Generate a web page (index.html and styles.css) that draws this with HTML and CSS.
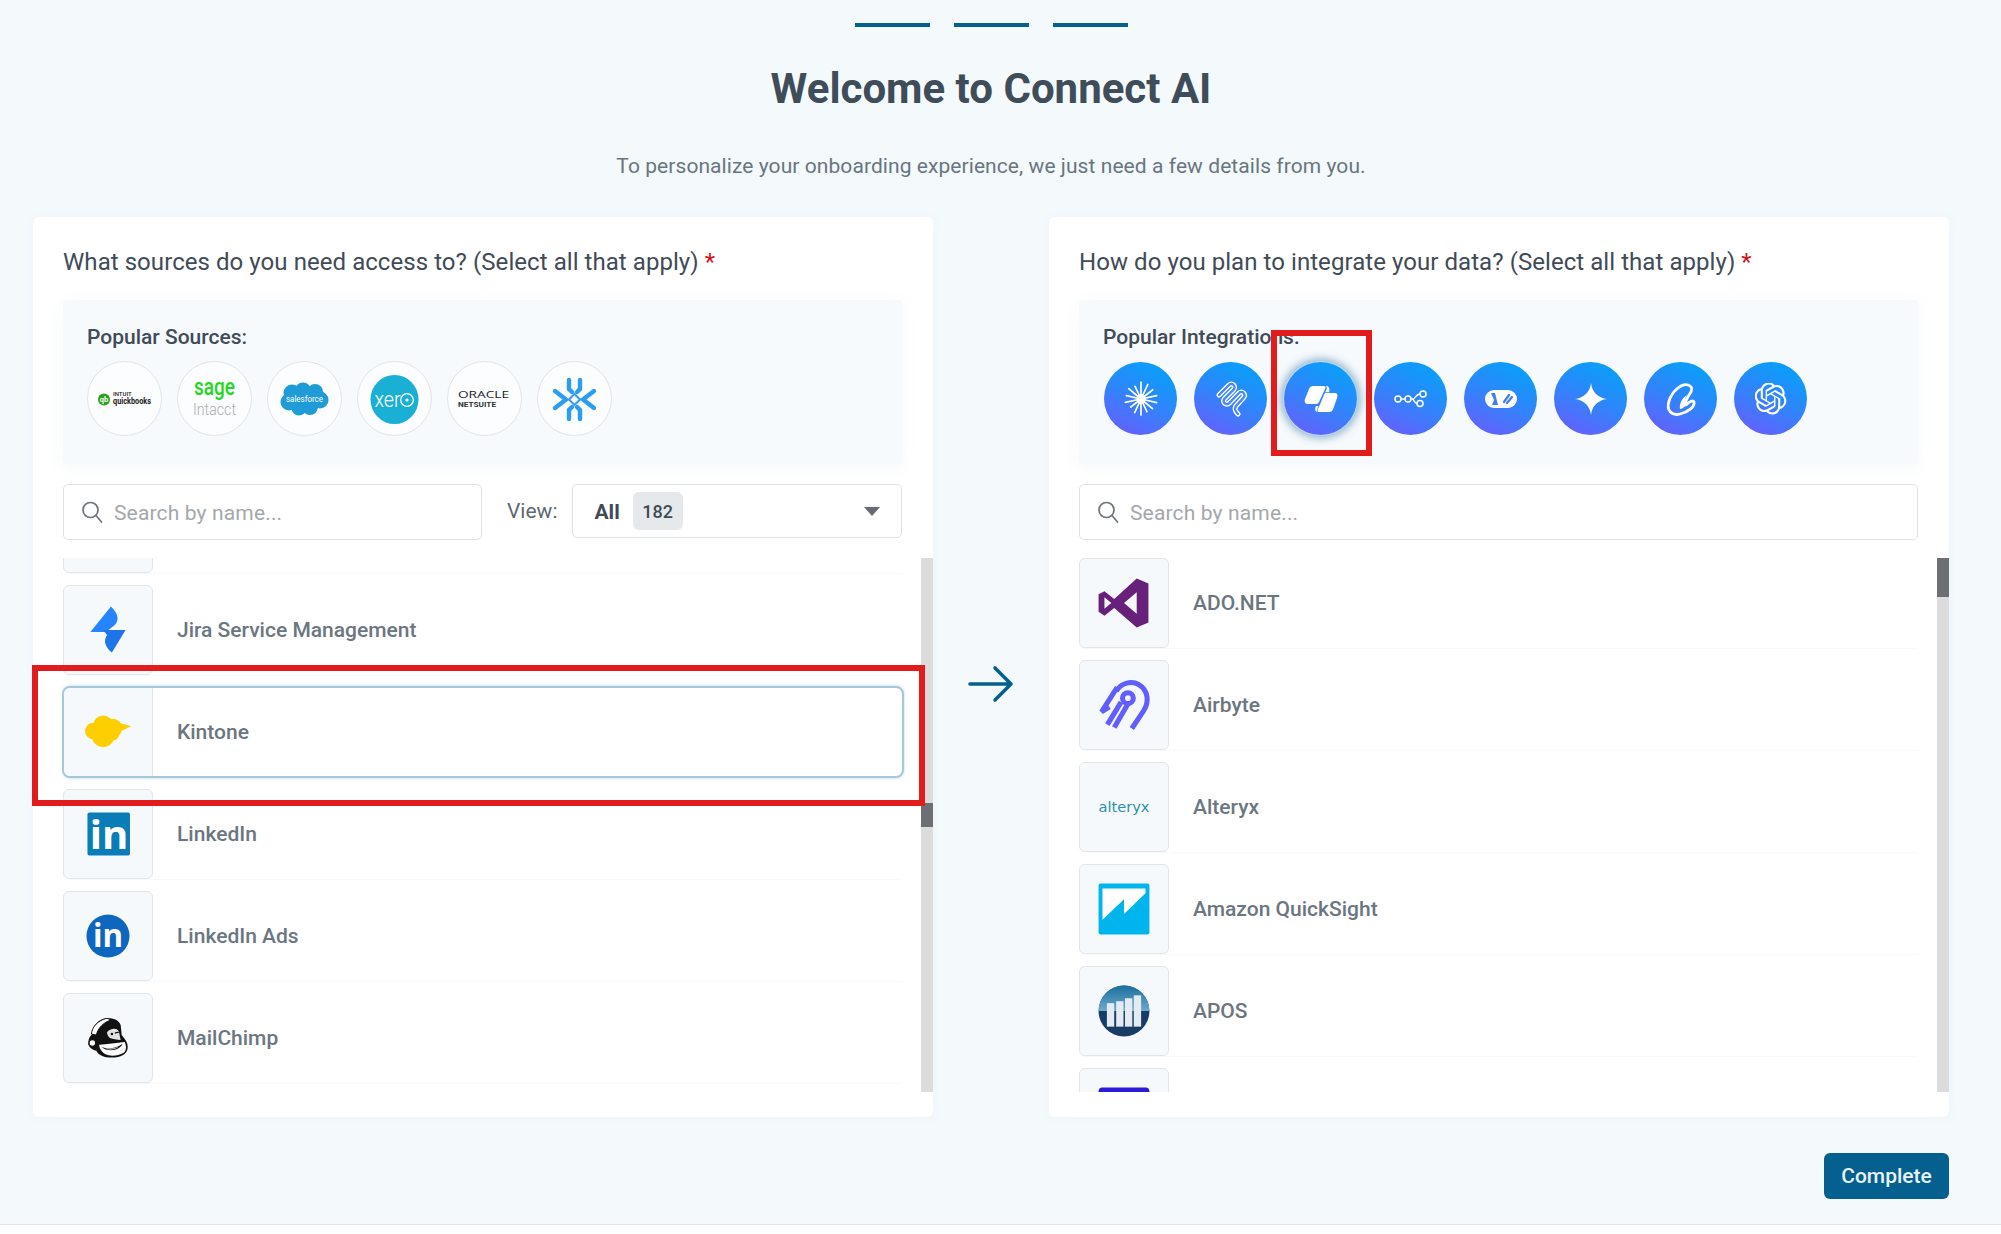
FILE: index.html
```html
<!DOCTYPE html>
<html lang="en">
<head>
<meta charset="utf-8">
<title>Welcome to Connect AI</title>
<link rel="stylesheet" href="styles.css">
</head>
<body>
<main class="page">
  <div class="steps"><span class="step"></span><span class="step"></span><span class="step"></span></div>
  <h1 class="title">Welcome to Connect AI</h1>
  <p class="subtitle">To personalize your onboarding experience, we just need a few details from you.</p>

  <div class="columns">
    <section class="card">
      <h2 class="question">What sources do you need access to? (Select all that apply) <span class="req">*</span></h2>
      <div class="popular">
        <div class="popular-label">Popular Sources:</div>
        <div class="bubbles">
          <div class="bubble"><svg viewBox="0 0 73 73" class="bubble-svg"><circle cx="16" cy="37.500" r="6" fill="#2ca01c"/><text x="16" y="40" class="t-qb-mark">qb</text><text x="25" y="33.500" class="t-qb-a">INTUIT</text><text x="25" y="42" class="t-qb-b" textLength="38" lengthAdjust="spacingAndGlyphs">quickbooks</text></svg></div>
          <div class="bubble"><svg viewBox="0 0 73 73" class="bubble-svg"><text x="36.500" y="33" class="t-sage" textLength="41" lengthAdjust="spacingAndGlyphs">sage</text><text x="36.500" y="53" class="t-intacct" textLength="43" lengthAdjust="spacingAndGlyphs">Intacct</text></svg></div>
          <div class="bubble"><svg viewBox="0 0 73 73" class="bubble-svg"><g fill="#1f9bd7"><circle cx="24" cy="31" r="8.500"/><circle cx="35" cy="28.500" r="8"/><circle cx="47" cy="30" r="8"/><circle cx="52" cy="38" r="8.500"/><circle cx="42" cy="45" r="8"/><circle cx="31" cy="46" r="7.500"/><circle cx="21" cy="40" r="8.500"/><rect x="20" y="28" width="32" height="16"/></g><text x="36.500" y="39.500" class="t-sf" textLength="37" lengthAdjust="spacingAndGlyphs">salesforce</text></svg></div>
          <div class="bubble"><svg viewBox="0 0 73 73" class="bubble-svg"><ellipse cx="36.500" cy="37.500" rx="24" ry="24.500" fill="#1ab0d5"/><text x="16.500" y="45" class="t-xero" textLength="26" lengthAdjust="spacingAndGlyphs">xer</text><circle cx="49" cy="38" r="6.300" fill="none" stroke="#fff" stroke-width="1.300"/><circle cx="49" cy="38" r="1.600" fill="#fff"/></svg></div>
          <div class="bubble"><svg viewBox="0 0 73 73" class="bubble-svg"><text x="10" y="36" class="t-oracle" textLength="51" lengthAdjust="spacingAndGlyphs">ORACLE</text><text x="10" y="45" class="t-netsuite" textLength="38" lengthAdjust="spacingAndGlyphs">NETSUITE</text></svg></div>
          <div class="bubble"><svg viewBox="0 0 73 73" class="bubble-svg"><g fill="none" stroke="#2d9df0" stroke-width="4.400" stroke-linecap="round" stroke-linejoin="miter"><path d="M31 18V27L34 30M42 18V27L39 30"/><path d="M31 57V48L34 45M42 57V48L39 45"/><path d="M17 29 28 37.500 17 46"/><path d="M56 29 45 37.500 56 46"/></g><path d="M36.500 32 42 37.500 36.500 43 31 37.500Z" fill="none" stroke="#2d9df0" stroke-width="2"/></svg></div>
        </div>
      </div>
      <div class="filters">
        <label class="search search-narrow">
          <svg viewBox="0 0 24 24" class="search-icon"><circle cx="10.500" cy="10" r="7.500" fill="none" stroke="#6d747b" stroke-width="1.700"/><path d="M16 15.500 21.500 22" stroke="#6d747b" stroke-width="1.700" fill="none" stroke-linecap="round"/></svg>
          <input class="search-input" placeholder="Search by name...">
        </label>
        <span class="view-label">View:</span>
        <div class="select"><span class="select-value">All</span><span class="badge">182</span><span class="caret"></span></div>
      </div>
      <div class="list-wrap">
        <div class="list list-scrolled">
          <div class="row"><div class="tile"></div></div>
          <div class="row"><div class="tile"><svg viewBox="0 0 90 90" class="tile-svg"><path d="M48 21C55 28 57 34 52 40L43 47H27Z" fill="#2684ff"/><path d="M40 45H63L49 68C42 62 40 56 44 50Z" fill="#1f74ec"/></svg></div><span class="row-name">Jira Service Management</span></div>
          <div class="row row-selected"><div class="tile"><svg viewBox="0 0 90 90" class="tile-svg"><g fill="#fdcf00"><circle cx="30" cy="44" r="8.500"/><circle cx="40" cy="38" r="10"/><circle cx="50" cy="41" r="9.500"/><circle cx="40" cy="49" r="11.500"/><circle cx="50" cy="47" r="6.500"/><path d="M54 35 69 39 56 45Z"/></g></svg></div><span class="row-name">Kintone</span></div>
          <div class="row"><div class="tile"><svg viewBox="0 0 90 90" class="tile-svg"><rect x="24" y="23" width="43.500" height="44" rx="2" fill="#0a7cb8"/><text x="46" y="60" class="t-in-square">in</text></svg></div><span class="row-name">LinkedIn</span></div>
          <div class="row"><div class="tile"><svg viewBox="0 0 90 90" class="tile-svg"><circle cx="45" cy="45" r="22" fill="#0e66bf"/><text x="45" y="56" class="t-in-round">in</text></svg></div><span class="row-name">LinkedIn Ads</span></div>
          <div class="row"><div class="tile"><svg viewBox="0 0 90 90" class="tile-svg"><path d="M29 41C29 33 35 26 42 25 50 24 56 26 58 32L59 42C62 46 66 50 65 56 64 62 58 65 49 65 41 65 36 63 33 58 28 57 24 53 25 49 25 45 27 43 29 41Z" fill="#111"/><path d="M28 41C29 33 35 27 43 25 45 25 47 26 47 27 41 29 35 34 33 42Z" fill="#fff" stroke="#111" stroke-width="1"/><path d="M44 39C47 35 54 34 56 38 57 41 57 44 58 47 54 47 50 46 47 45 45 43 44 41 44 39Z" fill="#e2e2e2"/><path d="M36 52C44 51 54 50 62 49 64 53 64 58 61 60 56 63 48 64 43 62 39 60 36 56 36 52Z" fill="#fff"/><path d="M38 54C45 57 53 56 60 51 57 58 45 60 38 54Z" fill="#111"/><path d="M42 55.500C46 56.500 52 56 56 54 52 57 46 57.500 42 55.500Z" fill="#fff"/><circle cx="49" cy="41" r="1.300" fill="#111"/><path d="M52 40 56 39" stroke="#111" stroke-width="1.200"/><circle cx="29" cy="50" r="3.400" fill="#fff" stroke="#111" stroke-width="1.200"/></svg></div><span class="row-name">MailChimp</span></div>
        </div>
        <div class="scrollbar"><span class="thumb thumb-mid"></span></div>
      </div>
    </section>

    <div class="arrow-col">
      <svg viewBox="0 0 46 38" class="arrow"><path d="M2 19H43M27 3 43 19 27 35" fill="none" stroke="#05608f" stroke-width="3.600" stroke-linecap="round" stroke-linejoin="round"/></svg>
    </div>

    <section class="card">
      <h2 class="question">How do you plan to integrate your data? (Select all that apply) <span class="req">*</span></h2>
      <div class="popular">
        <div class="popular-label">Popular Integrations:</div>
        <div class="bubbles">
          <div class="orb"><svg viewBox="0 0 73 73" class="orb-svg"><g stroke="#fff" stroke-width="1.700" stroke-linecap="round"><path d="M37 37V20"/><path d="M37 37V21" transform="rotate(25 37 37)"/><path d="M37 37V22" transform="rotate(52 37 37)"/><path d="M37 37V21" transform="rotate(78 37 37)"/><path d="M37 37V21" transform="rotate(103 37 37)"/><path d="M37 37V22" transform="rotate(130 37 37)"/><path d="M37 37V23" transform="rotate(155 37 37)"/><path d="M37 37V21" transform="rotate(180 37 37)"/><path d="M37 37V22" transform="rotate(205 37 37)"/><path d="M37 37V24" transform="rotate(232 37 37)"/><path d="M37 37V21" transform="rotate(258 37 37)"/><path d="M37 37V22" transform="rotate(283 37 37)"/><path d="M37 37V21" transform="rotate(310 37 37)"/><path d="M37 37V23" transform="rotate(335 37 37)"/></g><circle cx="37" cy="37" r="4.500" fill="#fff"/></svg></div>
          <div class="orb"><svg viewBox="0 0 73 73" class="orb-svg"><path d="M25 33 35 23A3.250 3.250 0 0 1 39.600 27.600L30.600 36.600A3.250 3.250 0 0 0 35.200 41.200L45 31A3.250 3.250 0 0 1 49.600 35.600L42 44C40 47 41 49 44 52" fill="none" stroke="#fff" stroke-width="5.200" stroke-linecap="round" stroke-linejoin="round"/><path d="M25 33 35 23A3.250 3.250 0 0 1 39.600 27.600L30.600 36.600A3.250 3.250 0 0 0 35.200 41.200L45 31A3.250 3.250 0 0 1 49.600 35.600L42 44C40 47 41 49 44 52" fill="none" stroke="#4a88fb" stroke-width="2.400" stroke-linecap="round" stroke-linejoin="round"/></svg></div>
          <div class="orb orb-active"><svg viewBox="0 0 73 73" class="orb-svg"><path d="M29 24H39C42 24 42 25 41 27L35 40C34 42 33 42 31 42H25C21 42 20 40 21 37L25 27C26 25 27 24 29 24Z" fill="#fff"/><path d="M42 24C45 24 46 26 45 31H41L43 26Z" fill="#fff"/><path d="M32 44H36L33.500 50C31 49.500 30.500 47 32 44Z" fill="#fff"/><path d="M42 31H50C53.500 31 54 33 53 36L49.500 46C48.500 49 47 50 45 50H35C33 50 33 49 34 47L40 33C40.500 31.500 41 31 42 31Z" fill="#fff" stroke="#3d84fb" stroke-width="1.400" paint-order="stroke"/></svg></div>
          <div class="orb"><svg viewBox="0 0 73 73" class="orb-svg"><g fill="none" stroke="#fff" stroke-width="1.500"><circle cx="24" cy="37" r="3"/><circle cx="34" cy="37" r="3"/><circle cx="49" cy="32" r="3"/><circle cx="46" cy="41.500" r="3"/><path d="M27 37H31M37 37H39C41 37 42 32 46 32M39 37C40 39 41 41 43 41.500"/></g></svg></div>
          <div class="orb"><svg viewBox="0 0 73 73" class="orb-svg"><rect x="21" y="28" width="32" height="18" rx="9" fill="#fff"/><path d="M27 31 31 31 34 43H28L30 38Z" fill="#3f7df8"/><path d="M40 40 45 33M43 41 48 35" stroke="#3f7df8" stroke-width="2.200" fill="none" stroke-linecap="round"/></svg></div>
          <div class="orb"><svg viewBox="0 0 73 73" class="orb-svg"><path d="M37 21C38 30 44 36 53 37 44 38 38 44 37 53 36 44 30 38 21 37 30 36 36 30 37 21Z" fill="#fff"/></svg></div>
          <div class="orb"><svg viewBox="0 0 73 73" class="orb-svg"><path d="M44 23C38 21 28 29 25 39 22 49 28 54 36 52 44 50 51 45 50 40 49 38 46 39 42 43 40 40 44 35 47 30 49 26 47 24 44 23Z" fill="none" stroke="#fff" stroke-width="2.800" stroke-linejoin="round"/><path d="M43 33C38 36 35 42 36 47 38 47 39 46 42 43.500 40 41 41 36 43 33Z" fill="#fff"/></svg></div>
          <div class="orb"><svg viewBox="0 0 24 24" class="orb-svg orb-svg-openai"><path fill="#fff" d="M22.2819 9.8211a5.9847 5.9847 0 0 0-.5157-4.9108 6.0462 6.0462 0 0 0-6.5098-2.9A6.0651 6.0651 0 0 0 4.9807 4.1818a5.9847 5.9847 0 0 0-3.9977 2.9 6.0462 6.0462 0 0 0 .7427 7.0966 5.98 5.98 0 0 0 .511 4.9107 6.051 6.051 0 0 0 6.5146 2.9001A5.9847 5.9847 0 0 0 13.2599 24a6.0557 6.0557 0 0 0 5.7718-4.2058 5.9894 5.9894 0 0 0 3.9977-2.9001 6.0557 6.0557 0 0 0-.7475-7.0729zm-9.022 12.6081a4.4755 4.4755 0 0 1-2.8764-1.0408l.1419-.0804 4.7783-2.7582a.7948.7948 0 0 0 .3927-.6813v-6.7369l2.02 1.1686a.071.071 0 0 1 .038.052v5.5826a4.504 4.504 0 0 1-4.4945 4.4944zm-9.6607-4.1254a4.4708 4.4708 0 0 1-.5346-3.0137l.142.0852 4.783 2.7582a.7712.7712 0 0 0 .7806 0l5.8428-3.3685v2.3324a.0804.0804 0 0 1-.0332.0615L9.74 19.9502a4.4992 4.4992 0 0 1-6.1408-1.6464zM2.3408 7.8956a4.485 4.485 0 0 1 2.3655-1.9728V11.6a.7664.7664 0 0 0 .3879.6765l5.8144 3.3543-2.0201 1.1685a.0757.0757 0 0 1-.071 0l-4.8303-2.7865A4.504 4.504 0 0 1 2.3408 7.872zm16.5963 3.8558L13.1038 8.364 15.1192 7.2a.0757.0757 0 0 1 .071 0l4.8303 2.7913a4.4944 4.4944 0 0 1-.6765 8.1042v-5.6772a.79.79 0 0 0-.407-.667zm2.0107-3.0231l-.142-.0852-4.7735-2.7818a.7759.7759 0 0 0-.7854 0L9.409 9.2297V6.8974a.0662.0662 0 0 1 .0284-.0615l4.8303-2.7866a4.4992 4.4992 0 0 1 6.6802 4.66zM8.3065 12.863l-2.02-1.1638a.0804.0804 0 0 1-.038-.0567V6.0742a4.4992 4.4992 0 0 1 7.3757-3.4537l-.142.0805L8.704 5.459a.7948.7948 0 0 0-.3927.6813zm1.0976-2.3654l2.602-1.4998 2.6069 1.4998v2.9994l-2.5974 1.5-2.6067-1.5Z"/></svg></div>
        </div>
      </div>
      <div class="filters">
        <label class="search">
          <svg viewBox="0 0 24 24" class="search-icon"><circle cx="10.500" cy="10" r="7.500" fill="none" stroke="#6d747b" stroke-width="1.700"/><path d="M16 15.500 21.500 22" stroke="#6d747b" stroke-width="1.700" fill="none" stroke-linecap="round"/></svg>
          <input class="search-input" placeholder="Search by name...">
        </label>
      </div>
      <div class="list-wrap">
        <div class="list">
          <div class="row"><div class="tile"><svg viewBox="0 0 90 90" class="tile-svg"><path fill-rule="evenodd" fill="#68217a" d="M58 20 70 25V65L58 70 35 50 25 58 19 54V36L25 33 35 41ZM58 34 45 45 58 56ZM25 39V51L32 45Z"/></svg></div><span class="row-name">ADO.NET</span></div>
          <div class="row"><div class="tile"><svg viewBox="0 0 90 90" class="tile-svg"><g fill="none" stroke="#615eff" stroke-width="5.200"><path d="M37 31C42 22 53 20 60 24 70 30 71 42 65 51L53 69"/><circle cx="49" cy="38" r="5.500"/><path d="M49 44 35 68"/><path d="M38 27 22 52 30 47"/><path d="M42 42 28 65"/></g></svg></div><span class="row-name">Airbyte</span></div>
          <div class="row"><div class="tile"><svg viewBox="0 0 90 90" class="tile-svg"><text x="45" y="50" class="t-alteryx" textLength="52" lengthAdjust="spacingAndGlyphs">alteryx</text></svg></div><span class="row-name">Alteryx</span></div>
          <div class="row"><div class="tile"><svg viewBox="0 0 90 90" class="tile-svg"><rect x="19" y="19" width="52" height="52" rx="2" fill="#00b5ee"/><path d="M23 24H67V29L45 50V35L23 56Z" fill="#fff"/></svg></div><span class="row-name">Amazon QuickSight</span></div>
          <div class="row"><div class="tile"><svg viewBox="0 0 90 90" class="tile-svg"><defs><linearGradient id="aposTop" x1="0" y1="0" x2="0" y2="1"><stop offset="0" stop-color="#1a6f9f"/><stop offset="1" stop-color="#6fa9cc"/></linearGradient></defs><circle cx="45" cy="45" r="26" fill="#173c66"/><path d="M19 45A26 26 0 0 1 71 45Z" fill="url(#aposTop)"/><g fill="#e4ebf3"><rect x="27.500" y="37" width="7.500" height="24"/><rect x="37" y="35" width="7.500" height="26"/><rect x="46" y="32" width="7.500" height="29"/><rect x="55" y="29" width="7.500" height="32"/></g></svg></div><span class="row-name">APOS</span></div>
          <div class="row"><div class="tile"><svg viewBox="0 0 90 90" class="tile-svg"><rect x="19" y="19" width="52" height="52" rx="4" fill="#2a1bd8"/></svg></div></div>
        </div>
        <div class="scrollbar"><span class="thumb"></span></div>
      </div>
    </section>
  </div>

  <div class="actions"><button class="complete" type="button">Complete</button></div>
</main>
<div class="note note-kintone"></div>
<div class="note note-copilot"></div>
</body>
</html>
```

FILE: styles.css
```css
* { box-sizing: border-box; }
html, body { margin: 0; padding: 0; }
body {
  background: #fdfefe;
  font-family: Roboto, "Liberation Sans", sans-serif;
  color: #3c4a57;
  height: 1234px;
  overflow: hidden;
}
.page {
  height: 1225px;
  padding: 23px 52px 0 33px;
  background: #f4f9fc;
  border-bottom: 1px solid #dfe4e9;
}
.steps { display: flex; justify-content: center; gap: 24px; }
.step { width: 75px; height: 4px; background: #05608f; }
.title {
  margin: 37px 0 0;
  font-size: 42px;
  line-height: 50px;
  font-weight: 700;
  text-align: center;
  color: #3f4c59;
}
.subtitle {
  margin: 37px 0 0;
  font-size: 21px;
  letter-spacing: .07px;
  line-height: 30px;
  font-weight: 400;
  text-align: center;
  color: #69757f;
}
.columns {
  display: grid;
  grid-template-columns: 900px 1fr 900px;
  margin-top: 36px;
}
.card {
  height: 900px;
  padding: 30px 31px 25px 30px;
  background: #fff;
  border-radius: 6px;
  box-shadow: 0 0 12px rgba(120, 150, 180, .06);
}
.question {
  margin: 0 0 23px;
  font-size: 24px;
  letter-spacing: .06px;
  line-height: 30px;
  font-weight: 400;
  color: #3f4b57;
}
.req { color: #d0121b; }
.popular {
  height: 164px;
  padding: 25px 24px 0;
  background: #f6fafd;
  border-radius: 4px;
  box-shadow: 0 4px 16px rgba(140, 170, 195, .08);
}
.popular-label {
  font-size: 21px;
  line-height: 24px;
  font-weight: 500;
  color: #3f4b57;
  margin-bottom: 12px;
}
.bubbles { display: flex; gap: 15px; }
.bubble {
  width: 75px;
  height: 75px;
  border: 1px solid #e2e5e8;
  border-radius: 50%;
  background: #fbfdfe;
}
.bubble-svg { display: block; width: 73px; height: 73px; }
.orb {
  width: 73px;
  height: 73px;
  margin: 1px;
  border-radius: 50%;
  background: linear-gradient(205deg, #0f9bf9 18%, #2f85fb 50%, #6a5dfd 95%);
}
.orb-active { box-shadow: 0 0 0 1px #bfdcf0, 0 0 8px 3px rgba(0, 80, 140, .45); }
.orb-svg { display: block; width: 73px; height: 73px; }
.orb-svg-openai { padding: 20.500px; }
.t-qb-mark { font: 700 7.500px Roboto, sans-serif; fill: #fff; text-anchor: middle; }
.t-qb-a { font: 500 6px Roboto, sans-serif; fill: #222; }
.t-qb-b { font: 700 8.500px Roboto, sans-serif; fill: #222; }
.t-sage { font: 500 24px Roboto, sans-serif; fill: #1fd81f; text-anchor: middle; }
.t-intacct { font: 300 16px Roboto, sans-serif; fill: #a9adb0; text-anchor: middle; }
.t-sf { font: 400 9.500px Roboto, sans-serif; fill: #fff; text-anchor: middle; }
.t-xero { font: 300 22px Roboto, sans-serif; fill: #fff; }
.t-oracle { font: 500 9.500px "Open Sans", sans-serif; fill: #222; }
.t-netsuite { font: 700 7px Roboto, sans-serif; fill: #333; }
.t-in-square { font: 700 41px "Open Sans", sans-serif; fill: #fff; text-anchor: middle; }
.t-in-round { font: 700 32px "Open Sans", sans-serif; fill: #fff; text-anchor: middle; }
.t-alteryx { font: 400 15px "DejaVu Sans", sans-serif; fill: #2a90ab; text-anchor: middle; }
.filters {
  display: flex;
  align-items: flex-start;
  height: 55px;
  margin: 20px 0 19px;
}
.search {
  flex: 1;
  display: flex;
  align-items: center;
  gap: 10px;
  height: 56px;
  padding: 0 16px;
  background: #fff;
  border: 1px solid #dfe2e5;
  border-radius: 5px;
}
.search-narrow { flex: 0 0 419px; }
.search-icon { flex: none; width: 24px; height: 24px; }
.search-input {
  flex: 1;
  min-width: 0;
  height: 40px;
  border: 0;
  outline: 0;
  padding: 2px 0 0;
  background: transparent;
  font: 400 21px Roboto, sans-serif;
  letter-spacing: .15px;
  color: #3c4a57;
}
.search-input::placeholder { color: #a3a8ac; opacity: 1; }
.view-label {
  margin: 0 15px 0 25px;
  font-size: 21px;
  line-height: 54px;
  color: #5d6872;
}
.select {
  flex: 1;
  display: flex;
  align-items: center;
  height: 54px;
  padding: 0 21px;
  border: 1px solid #dfe2e5;
  border-radius: 5px;
  background: #fff;
}
.select-value { padding-top: 2px; font-size: 21px; font-weight: 700; color: #3f4b57; }
.badge {
  margin-left: 13px;
  width: 50px;
  height: 38px;
  border-radius: 6px;
  background: #e6e9ec;
  text-align: center;
  font-size: 18px;
  font-weight: 500;
  line-height: 39px;
  color: #3f4b57;
}
.caret {
  margin-left: auto;
  border-style: solid;
  border-width: 9px 8px 0;
  border-color: #666d74 transparent transparent;
}
.list-wrap {
  display: flex;
  gap: 19px;
  height: 534px;
  margin-right: -31px;
}
.list {
  flex: 1;
  min-width: 0;
  overflow: hidden;
  display: flex;
  flex-direction: column;
  gap: 12px;
}
.list-scrolled { margin-left: -1px; padding-left: 1px; padding-right: 3px; margin-right: -3px; }
.list-scrolled .row:first-child { margin-top: -75px; }
.row {
  flex: none;
  display: flex;
  align-items: center;
  gap: 24px;
  height: 90px;
  box-shadow: 0 1px 0 #f8f9fa;
  border-radius: 6px 0 0 6px;
}
.list-scrolled .row-selected {
  height: 92px;
  margin: -1px -2px -1px -1px;
  border: 2px solid #a5cadb;
  border-radius: 8px;
  background: #fff;
  box-shadow: 0 0 3px rgba(60, 130, 180, .35);
}
.row-selected .tile {
  width: 89px;
  height: 88px;
  border-width: 0 1px 0 0;
  border-radius: 6px 0 0 6px;
}
.tile {
  flex: none;
  width: 90px;
  height: 90px;
  background: #f6f9fc;
  border: 1px solid #e3e6e9;
  border-radius: 6px;
}
.tile-svg { display: block; width: 88px; height: 88px; }
.row-name {
  font-size: 21px;
  font-weight: 500;
  color: #6b7680;
}
.scrollbar {
  flex: none;
  width: 12px;
  background: #dcdcdc;
}
.thumb { display: block; height: 39px; background: #6c7075; }
.thumb-mid { height: 24px; margin-top: 245px; }
.arrow-col { display: flex; align-items: center; justify-content: center; padding-top: 34px; }
.arrow { width: 46px; height: 38px; }
.actions { display: flex; justify-content: flex-end; margin-top: 36px; }
.complete {
  width: 125px;
  height: 46px;
  border: 0;
  border-radius: 6px;
  background: #05608f;
  color: #e8f5fc;
  font: 500 21px Roboto, sans-serif;
}
.note { position: absolute; border: 6px solid #e21c1c; }
.note-kintone { left: 32px; top: 665px; width: 893px; height: 141px; }
.note-copilot { left: 1271px; top: 330px; width: 101px; height: 126px; }
```
